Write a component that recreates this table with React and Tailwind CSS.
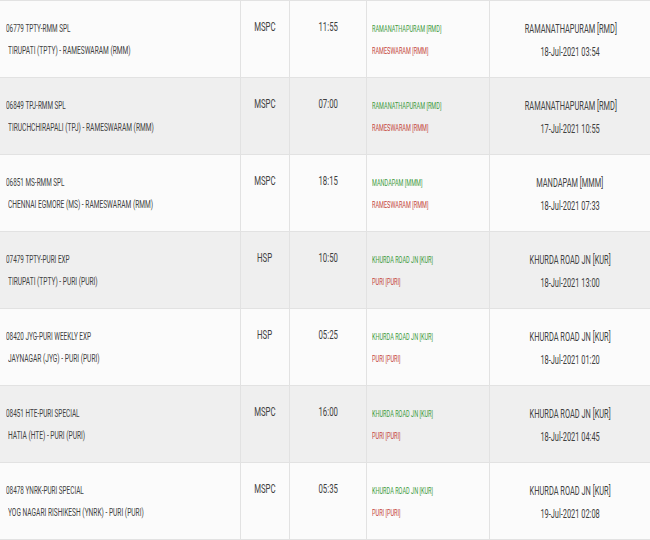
import React from "react";

const trains = [
  { name: "06779 TPTY-RMM SPL", route: "TIRUPATI (TPTY) - RAMESWARAM (RMM)", type: "MSPC", time: "11:55", from: "RAMANATHAPURAM [RMD]", to: "RAMESWARAM [RMM]", at: "RAMANATHAPURAM [RMD]", date: "18-Jul-2021 03:54" },
  { name: "06849 TPJ-RMM SPL", route: "TIRUCHCHIRAPALI (TPJ) - RAMESWARAM (RMM)", type: "MSPC", time: "07:00", from: "RAMANATHAPURAM [RMD]", to: "RAMESWARAM [RMM]", at: "RAMANATHAPURAM [RMD]", date: "17-Jul-2021 10:55" },
  { name: "06851 MS-RMM SPL", route: "CHENNAI EGMORE (MS) - RAMESWARAM (RMM)", type: "MSPC", time: "18:15", from: "MANDAPAM [MMM]", to: "RAMESWARAM [RMM]", at: "MANDAPAM [MMM]", date: "18-Jul-2021 07:33" },
  { name: "07479 TPTY-PURI EXP", route: "TIRUPATI (TPTY) - PURI (PURI)", type: "HSP", time: "10:50", from: "KHURDA ROAD JN [KUR]", to: "PURI [PURI]", at: "KHURDA ROAD JN [KUR]", date: "18-Jul-2021 13:00" },
  { name: "08420 JYG-PURI WEEKLY EXP", route: "JAYNAGAR (JYG) - PURI (PURI)", type: "HSP", time: "05:25", from: "KHURDA ROAD JN [KUR]", to: "PURI [PURI]", at: "KHURDA ROAD JN [KUR]", date: "18-Jul-2021 01:20" },
  { name: "08451 HTE-PURI SPECIAL", route: "HATIA (HTE) - PURI (PURI)", type: "MSPC", time: "16:00", from: "KHURDA ROAD JN [KUR]", to: "PURI [PURI]", at: "KHURDA ROAD JN [KUR]", date: "18-Jul-2021 04:45" },
  { name: "08478 YNRK-PURI SPECIAL", route: "YOG NAGARI RISHIKESH (YNRK) - PURI (PURI)", type: "MSPC", time: "05:35", from: "KHURDA ROAD JN [KUR]", to: "PURI [PURI]", at: "KHURDA ROAD JN [KUR]", date: "19-Jul-2021 02:08" },
];

// narrow text: the page squeezes its font horizontally
const Narrow = ({ children, className = "" }) => (
  <span className={`inline-block whitespace-nowrap ${className}`}>{children}</span>
);

const App = () => {
  return (
    <div className="w-[650px] h-[540px] overflow-hidden bg-white text-[#3f3f3f]" style={{ fontFamily: "Roboto, 'Liberation Sans', sans-serif" }}>
      <div className="border-t border-[#e2e2e2]">
        {trains.map((t, i) => (
          <div
            key={t.name}
            className={`grid grid-cols-[241px_49px_77px_123px_160px] h-[77px] border-b border-[#e2e2e2] ${i % 2 ? "bg-[#efefef]" : "bg-[#fbfbfb]"}`}
          >
            <div className="border-r border-[#e2e2e2] pt-[19px] pl-[6px]">
              <div className="text-[11px] leading-[18px]"><Narrow className="origin-left scale-x-[0.58]">{t.name}</Narrow></div>
              <div className="text-[11px] leading-[18px] mt-[4px] pl-[2px]"><Narrow className="origin-left scale-x-[0.6]">{t.route}</Narrow></div>
            </div>
            <div className="border-r border-[#e2e2e2] pt-[17px] text-center text-[13px] leading-[18px]">
              <Narrow className="origin-center scale-x-[0.6]">{t.type}</Narrow>
            </div>
            <div className="border-r border-[#e2e2e2] pt-[17px] text-center text-[13px] leading-[18px]">
              <Narrow className="origin-center scale-x-[0.6]">{t.time}</Narrow>
            </div>
            <div className="border-r border-[#e2e2e2] pt-[21px] pl-[5px]">
              <div className="text-[9px] leading-[14px] text-[#3c9a3c]"><Narrow className="origin-left scale-x-[0.62]">{t.from}</Narrow></div>
              <div className="text-[9px] leading-[14px] mt-[8px] text-[#c4463c]"><Narrow className="origin-left scale-x-[0.62]">{t.to}</Narrow></div>
            </div>
            <div className="pt-[19px] text-center text-[13px] leading-[18px]">
              <div><Narrow className="origin-center scale-x-[0.57]">{t.at}</Narrow></div>
              <div className="mt-[5px]"><Narrow className="origin-center scale-x-[0.57]">{t.date}</Narrow></div>
            </div>
          </div>
        ))}
      </div>
    </div>
  );
};

export default App;
